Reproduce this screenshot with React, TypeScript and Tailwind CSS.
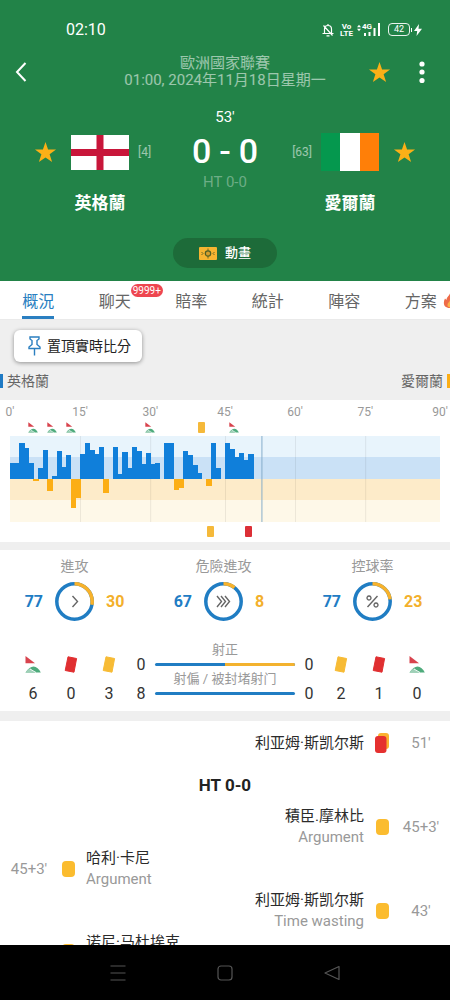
import React from 'react';

const BARS = [
  16, 16, 36, 31, 16, -2, 11, 29, -12, 3, 28, 12, 24, -29, -19, 25, 36, 29, 25, 32, -14, 0, 32, 5, 27, 11,
  32, 28, 15, 26, 15, 16, 0, 36, 36, -11, -9, 28, 24, 14, 6, 0, -7, 36, 11, 0, 36, 30, 22, 26, 19, 25,
];

// The first half has one extra column for added time, so 45' sits at column 46
const TICKS = [
  { label: "0'", col: 0 },
  { label: "15'", col: 15 },
  { label: "30'", col: 30 },
  { label: "45'", col: 46 },
  { label: "60'", col: 61 },
  { label: "75'", col: 76 },
  { label: "90'", col: 92 },
];

type MarkKind = 'corner' | 'yellow' | 'red' | 'second';

const HOME_MARKS: { kind: MarkKind; col: number }[] = [
  { kind: 'corner', col: 5 },
  { kind: 'corner', col: 9 },
  { kind: 'corner', col: 13 },
  { kind: 'corner', col: 30 },
  { kind: 'yellow', col: 41 },
  { kind: 'corner', col: 48 },
];

const AWAY_MARKS: { kind: MarkKind; col: number }[] = [
  { kind: 'yellow', col: 43 },
  { kind: 'red', col: 51 },
];

const TABS = ['概況', '聊天', '賠率', '統計', '陣容', '方案'];

const RINGS = [
  { label: '進攻', home: 77, away: 30, icon: 'M8 4.500l5 5.500-5 5.500' },
  { label: '危險進攻', home: 67, away: 8, icon: 'M3.500 4.500l4.500 5.500-4.500 5.500M7.500 4.500l4.500 5.500-4.500 5.500M11.500 4.500l4.500 5.500-4.500 5.500' },
  {
    label: '控球率',
    home: 77,
    away: 23,
    icon: 'M15 4.500L5 15.500M6.500 4.500a2 2 0 1 0 .01 0M13.500 11.500a2 2 0 1 0 .01 0',
  },
];

const EVENTS: { side: 'home' | 'away'; name: string; note?: string; time: string; kind: MarkKind }[] = [
  { side: 'away', name: '積臣.摩林比', note: 'Argument', time: "45+3'", kind: 'yellow' },
  { side: 'home', name: '哈利·卡尼', note: 'Argument', time: "45+3'", kind: 'yellow' },
  { side: 'away', name: '利亚姆·斯凯尔斯', note: 'Time wasting', time: "43'", kind: 'yellow' },
];

function Star() {
  return (
    <svg viewBox="0 0 24 24" className="w-[23px] h-[23px] fill-[#fbb017]">
      <path d="M12 1l2.700 7.900h8.300l-6.700 4.900 2.600 8.200L12 17.100 5.100 22l2.600-8.200L1 8.900h8.300z" />
    </svg>
  );
}

function CornerFlag({ small }: { small?: boolean }) {
  return (
    <svg viewBox="0 0 16 17" className={small ? 'w-[10px] h-[11px]' : 'w-4 h-[17px]'}>
      <path d="M.5 0L10 7.200H.5z" fill="#d8434d" />
      <path d="M.5 16.500C3 12.500 6 10.500 8.500 10.500c3 0 5.500 2.500 7.300 6z" fill="#4fab7c" />
      <path d="M.5 16.500c1.500-2.200 3-3.500 4.500-4.200l5 4.200z" fill="#9fd0b8" />
      <path d="M5 13l6 3.500" stroke="#fff" strokeWidth=".9" />
    </svg>
  );
}

function TiltedCard({ color }: { color: string }) {
  return (
    <svg viewBox="0 0 14 17" className="w-[14px] h-[17px]">
      <path d="M4 .8l8.600 1.700-2.600 13.700L1.200 14.500z" fill={color} stroke={color} strokeLinejoin="round" />
    </svg>
  );
}

function EventCard({ kind }: { kind: MarkKind }) {
  if (kind === 'second') {
    return (
      <svg viewBox="0 0 14 20" className="w-[14px] h-5">
        <rect x="3" y="0" width="11" height="16" rx="3" fill="#fbb130" />
        <rect x="0" y="3" width="11.500" height="17" rx="3" fill="#e5302f" />
      </svg>
    );
  }
  return <span className="w-[13px] h-4 rounded-sm bg-[#fbbc2f]" />;
}

function Marks({ items }: { items: { kind: MarkKind; col: number }[] }) {
  return (
    <div className="grid grid-cols-[repeat(92,minmax(0,1fr))] grid-rows-1 h-[14px] items-center">
      {items.map((m) => (
        <div key={m.col} className="row-start-1 w-0 flex justify-center" style={{ gridColumnStart: m.col + 1 }}>
          <span className="shrink-0">
            {m.kind === 'corner' && <CornerFlag small />}
            {m.kind === 'yellow' && <span className="block w-[7px] h-[11px] rounded-[1px] bg-[#f5b93a]" />}
            {m.kind === 'red' && <span className="block w-[7px] h-[11px] rounded-[1px] bg-[#dc2f36]" />}
          </span>
        </div>
      ))}
    </div>
  );
}

function StatusBar() {
  return (
    <div className="h-[55px] pt-1 pl-[66px] pr-7 flex items-center justify-between">
      <span className="text-base">02:10</span>
      <div className="flex items-center">
        <svg viewBox="0 0 12 14" className="w-3 h-[14px]" fill="none" stroke="currentColor" strokeWidth="1.2">
          <path d="M2.500 10V6a3.500 3.500 0 0 1 7 0v4M.5 10.500h11M4.500 12.800h3M6 1v1.500M1.500 2.500l9 10" />
        </svg>
        <span className="ml-1.5 text-[8px] leading-[7px] font-bold text-center">
          Vo
          <br />
          LTE
        </span>
        <svg viewBox="0 0 5 8" className="ml-1 mb-1 w-1 h-2 fill-current">
          <path d="M0 3l2.500-3L5 3zM0 5l2.500 3L5 5z" />
        </svg>
        <span className="mb-1.5 ml-px text-[8px] leading-[8px] font-bold">4G</span>
        <svg viewBox="0 0 17 13" className="-ml-2 w-[17px] h-[13px] fill-current">
          <path d="M0 10h2v3H0zM4.500 9h2v4h-2zM9.500 5h2v8h-2zM14 0h2v13h-2z" />
        </svg>
        <span className="ml-[7px] w-[22px] h-[13px] rounded border border-white/90 text-[9px] leading-[11px] text-center">42</span>
        <span className="w-px h-1 ml-px bg-white" />
        <svg viewBox="0 0 8 12" className="ml-0.5 w-2 h-3 fill-current">
          <path d="M5 0L0 7h3.200L2.500 12 8 4.800H4.500z" />
        </svg>
      </div>
    </div>
  );
}

function MatchHeader() {
  return (
    <header className="bg-[#228348] text-white">
      <StatusBar />
      <div className="grid grid-cols-[1fr_auto_1fr] items-center">
        <button aria-label="返回" className="ml-[13px] w-4">
          <svg viewBox="0 0 16 20" className="w-4 h-5" fill="none" stroke="currentColor" strokeWidth="2">
            <path d="M12.500 1L4 10l8.500 9" />
          </svg>
        </button>
        <h1 className="text-[15px] leading-[17px] text-center text-white/55">
          歐洲國家聯賽
          <br />
          01:00, 2024年11月18日星期一
        </h1>
        <div className="flex items-center justify-end gap-[25px] pr-[22px]">
          <button aria-label="收藏賽事">
            <Star />
          </button>
          <button aria-label="更多">
            <svg viewBox="0 0 12 24" className="w-3 h-6 fill-current">
              <circle cx="6" cy="4" r="2.600" />
              <circle cx="6" cy="12" r="2.600" />
              <circle cx="6" cy="20.500" r="2.600" />
            </svg>
          </button>
        </div>
      </div>

      <div className="grid grid-cols-[1fr_66px_1fr] pt-[18px]">
        <div className="flex items-start pl-[34px] pt-[26px]">
          <button aria-label="收藏英格蘭" className="h-[38px] mr-[14px]">
            <Star />
          </button>
          <div className="w-[58px] flex flex-col items-center">
            <div className="h-[38px] flex items-center">
              <svg viewBox="0 0 58 35" className="w-[58px] h-[35px]">
                <path d="M0 0h58v35H0z" fill="#fff" />
                <path d="M25.500 0h7v35h-7zM0 14h58v7H0z" fill="#c8163a" />
              </svg>
            </div>
            <h2 className="mt-5 text-[17px] leading-6 font-bold">英格蘭</h2>
          </div>
          <span className="ml-[9px] text-xs leading-[38px] text-white/55">[4]</span>
        </div>
        <div className="text-center whitespace-nowrap">
          <p className="text-[15px] leading-5">53'</p>
          <p className="mt-1 text-[34px] leading-10 font-medium flex justify-between">
            <span>0</span>
            <span>-</span>
            <span>0</span>
          </p>
          <p className="text-[15px] leading-[22px] text-white/35">HT 0-0</p>
        </div>
        <div className="flex flex-row-reverse items-start pr-[34px] pt-[26px]">
          <button aria-label="收藏愛爾蘭" className="h-[38px] ml-[14px]">
            <Star />
          </button>
          <div className="w-[58px] flex flex-col items-center">
            <svg viewBox="0 0 58 38" className="w-[58px] h-[38px]">
              <path d="M0 0h20v38H0z" fill="#05984e" />
              <path d="M19 0h20v38H19z" fill="#fff" />
              <path d="M39 0h19v38H39z" fill="#ff7f08" />
            </svg>
            <h2 className="mt-5 text-[17px] leading-6 font-bold">愛爾蘭</h2>
          </div>
          <span className="mr-[9px] text-xs leading-[38px] text-white/55">[63]</span>
        </div>
      </div>

      <div className="flex justify-center pt-[23px] pb-[13px]">
        <button className="h-[30px] px-[26px] flex items-center gap-2 rounded-full bg-[#1d6b39] text-[13px] font-medium">
          <svg viewBox="0 0 18 13" className="w-[18px] h-[13px]">
            <rect width="18" height="13" rx="1" fill="#f6b431" />
            <path d="M9 1.500v10M2.500 5l1.500 1.500L2.500 8M15.500 5L14 6.500 15.500 8" stroke="#6d6a26" fill="none" />
            <circle cx="9" cy="6.500" r="2.700" fill="#d39e2e" stroke="#4f5f25" strokeWidth="1.200" />
          </svg>
          動畫
        </button>
      </div>
    </header>
  );
}

function TabBar() {
  return (
    <nav className="bg-white border-b border-[#eaeaea] overflow-hidden">
      <div className="grid grid-cols-6 w-[102%]">
        {TABS.map((tab, i) => (
          <button
            key={tab}
            className={
              i === 0
                ? 'justify-self-center relative h-[38px] text-base text-[#2a7fc1] border-b-[3px] border-[#2a7fc1] pt-[6px]'
                : 'justify-self-center relative h-[38px] text-base text-[#666] pt-[3px]'
            }
          >
            {tab}
            {i === 1 && (
              <span className="absolute left-8 top-[3px] h-[13px] px-0.5 rounded-full bg-[#ee4650] text-white text-[10px] leading-[13px]">
                9999+
              </span>
            )}
            {i === 5 && (
              <svg viewBox="0 0 14 16" className="absolute left-[38px] top-[11px] w-[14px] h-4">
                <path d="M7 0c1 3-4 5-3.500 8L2 6.500C0 10 0 16 7 16s7-6 5-9l-1.500 1.500C11 5 9 2 7 0z" fill="#ee6b48" />
                <path d="M7 8c0 2-3 3-2.500 5.500S9 16 9.500 13 7.500 10 7 8z" fill="#fbb24a" />
              </svg>
            )}
          </button>
        ))}
      </div>
    </nav>
  );
}

function MomentumChart() {
  return (
    <section className="bg-white px-[10px] pt-1 pb-1">
      <div className="grid grid-cols-[repeat(92,minmax(0,1fr))] text-xs leading-4 text-[#999]">
        {TICKS.map((t) => (
          <div key={t.col} className="row-start-1 w-0 flex justify-center" style={{ gridColumnStart: t.col + 1 }}>
            <span>{t.label}</span>
          </div>
        ))}
      </div>
      <Marks items={HOME_MARKS} />
      <svg viewBox="0 0 92 86" preserveAspectRatio="none" className="block my-0.5 w-full h-[86px]">
        <rect width="92" height="22" fill="#e8f4fc" />
        <rect y="21" width="92" height="22" fill="#cae1f6" />
        <rect y="43" width="92" height="22" fill="#fdebc9" />
        <rect y="64" width="92" height="22" fill="#fef8e8" />
        {TICKS.slice(1, 6).map((t) => (
          <rect key={t.col} x={t.col} width="0.2" height="86" fill="#000" opacity="0.08" />
        ))}
        {BARS.map((v, i) => (
          <rect
            key={i}
            x={i}
            y={v > 0 ? 43 - v : 43}
            width="1.15"
            height={Math.abs(v)}
            fill={v > 0 ? '#107fda' : '#fcae15'}
            shapeRendering="crispEdges"
          />
        ))}
        <rect x="53.800" width="0.200" height="86" fill="#7fa9c8" />
      </svg>
      <Marks items={AWAY_MARKS} />
    </section>
  );
}

function Ring({ home, away, icon }: { home: number; away: number; icon: string }) {
  const share = (away / (home + away)) * 100;
  return (
    <svg viewBox="0 0 39 39" className="w-[39px] h-[39px]" fill="none">
      <circle cx="19.500" cy="19.500" r="17.700" stroke="#207dc3" strokeWidth="3.500" />
      <circle
        cx="19.500"
        cy="19.500"
        r="17.700"
        stroke="#f8b22b"
        strokeWidth="3.500"
        pathLength="100"
        strokeDasharray={`${share} ${100 - share}`}
        transform="rotate(-90 19.500 19.500)"
      />
      <path d={icon} transform="translate(9.500 9.500)" stroke="#666" strokeWidth="1.400" />
    </svg>
  );
}

function ShotRow({ label, away }: { label: string; away: number }) {
  return (
    <div className="h-[29px]">
      <p className="text-[13px] leading-[18px] text-center text-[#999] whitespace-nowrap">{label}</p>
      <div className="mt-1 h-[3px] flex rounded-full overflow-hidden bg-[#207dc3]">
        <div className="ml-auto bg-[#f3b22f]" style={{ width: `${away}%` }} />
      </div>
    </div>
  );
}

function Tally({ icon, value }: { icon: React.ReactNode; value: number }) {
  return (
    <div className="w-[38px] text-center">
      <div className="h-[29px] flex items-center justify-center">{icon}</div>
      <div className="leading-[29px]">{value}</div>
    </div>
  );
}

function Shots({ on, off }: { on: number; off: number }) {
  return (
    <div className="w-[26px] text-center leading-[29px]">
      <div>{on}</div>
      <div>{off}</div>
    </div>
  );
}

function Stats() {
  return (
    <section className="bg-white pt-[6px] pb-[3px]">
      <div className="grid grid-cols-3 pr-[3px]">
        {RINGS.map((r) => (
          <div key={r.label}>
            <h3 className="text-sm leading-5 text-center text-[#999]">{r.label}</h3>
            <div className="mt-[6px] flex items-center justify-center gap-3 font-bold">
              <span className="w-5 text-right text-[#217cc4]">{r.home}</span>
              <Ring home={r.home} away={r.away} icon={r.icon} />
              <span className="w-5 text-[#f3b02b]">{r.away}</span>
            </div>
          </div>
        ))}
      </div>
      <div className="mt-5 px-[14px] flex items-end text-[#333]">
        <Tally icon={<CornerFlag />} value={6} />
        <Tally icon={<TiltedCard color="#e02f31" />} value={0} />
        <Tally icon={<TiltedCard color="#f7bb35" />} value={3} />
        <Shots on={0} off={8} />
        <div className="flex-1 min-w-0 px-px pb-[9px]">
          <ShotRow label="射正" away={50} />
          <ShotRow label="射偏 / 被封堵射门" away={0} />
        </div>
        <Shots on={0} off={0} />
        <Tally icon={<TiltedCard color="#f7bb35" />} value={2} />
        <Tally icon={<TiltedCard color="#e02f31" />} value={1} />
        <Tally icon={<CornerFlag />} value={0} />
      </div>
    </section>
  );
}

function EventRow({ side, name, note, time, kind }: (typeof EVENTS)[number]) {
  const away = side === 'away';
  return (
    <li className={away ? 'h-[42px] flex flex-row-reverse items-center' : 'h-[42px] flex items-center'}>
      <span className="w-[58px] text-center text-[#999]">{time}</span>
      <span className="w-5 flex justify-center">
        <EventCard kind={kind} />
      </span>
      <div className={away ? 'px-2 text-right' : 'px-2'}>
        <p className="text-[#2b2b2b]">{name}</p>
        {note && <p className="text-[#999]">{note}</p>}
      </div>
    </li>
  );
}

export default function App() {
  return (
    <div className="h-screen flex flex-col overflow-hidden bg-[#efefef] font-['Roboto','Noto_Sans_CJK_TC',sans-serif]">
      <MatchHeader />
      <TabBar />
      <main className="flex-1 min-h-0 flex flex-col overflow-hidden">
        <div className="pt-[10px] pb-[9px]">
          <button className="ml-[14px] h-8 pl-[13px] pr-[11px] flex items-center gap-[5px] rounded-md bg-white shadow-[0_1px_4px_rgba(0,0,0,0.4)] text-sm text-[#222]">
            <svg viewBox="0 0 14 20" className="w-[15px] h-5" fill="none" stroke="#2b7fc0" strokeWidth="1.400">
              <path d="M2.500 1h9v2l-2 1.500v4l3 2.500v1.500h-11V11l3-2.500v-4l-2-1.500zM7 12.500v7" />
            </svg>
            置頂實時比分
          </button>
          <div className="mt-[9px] flex items-center text-sm leading-5 text-[#666]">
            <span className="w-[3px] h-[14px] mr-1 bg-[#1f7ac4]" />
            英格蘭
            <span className="flex-1" />
            愛爾蘭
            <span className="w-[3px] h-[14px] ml-1 bg-[#fcae15]" />
          </div>
        </div>
        <MomentumChart />
        <div className="h-2 shrink-0" />
        <Stats />
        <div className="h-[10px] shrink-0" />
        <section className="bg-white flex-1 pt-px text-[15px] leading-[21px]">
          <ul>
            <EventRow side="away" name="利亚姆·斯凯尔斯" time="51'" kind="second" />
            <li className="h-[42px] text-center text-[17px] leading-[42px] font-bold text-[#222]">HT 0-0</li>
            {EVENTS.map((e) => (
              <EventRow key={e.name} {...e} />
            ))}
            {/* Next event, still collapsed under the navigation bar */}
            <li className="h-[42px] flex items-start">
              <span className="w-[58px]" />
              <span className="w-5 pt-3 flex justify-center">
                <EventCard kind="yellow" />
              </span>
              <p className="px-2 text-[#2b2b2b]">诺尼·马杜埃克</p>
            </li>
          </ul>
        </section>
      </main>
      <footer className="h-[55px] shrink-0 bg-black text-[#555] flex items-center justify-center gap-[87px]">
        <button aria-label="選單">
          <svg viewBox="0 0 20 20" className="w-5 h-5" fill="none" stroke="currentColor" strokeWidth="1.200">
            <path d="M2.500 3h15M2.500 10h15M2.500 17h15" />
          </svg>
        </button>
        <button aria-label="主頁">
          <svg viewBox="0 0 20 20" className="w-5 h-5" fill="none" stroke="currentColor" strokeWidth="1.200">
            <rect x="3" y="3" width="14" height="14" rx="3" />
          </svg>
        </button>
        <button aria-label="上一頁">
          <svg viewBox="0 0 20 20" className="w-5 h-5" fill="none" stroke="currentColor" strokeWidth="1.200" strokeLinejoin="round">
            <path d="M17 3.500v13L3 10z" />
          </svg>
        </button>
      </footer>
    </div>
  );
}
